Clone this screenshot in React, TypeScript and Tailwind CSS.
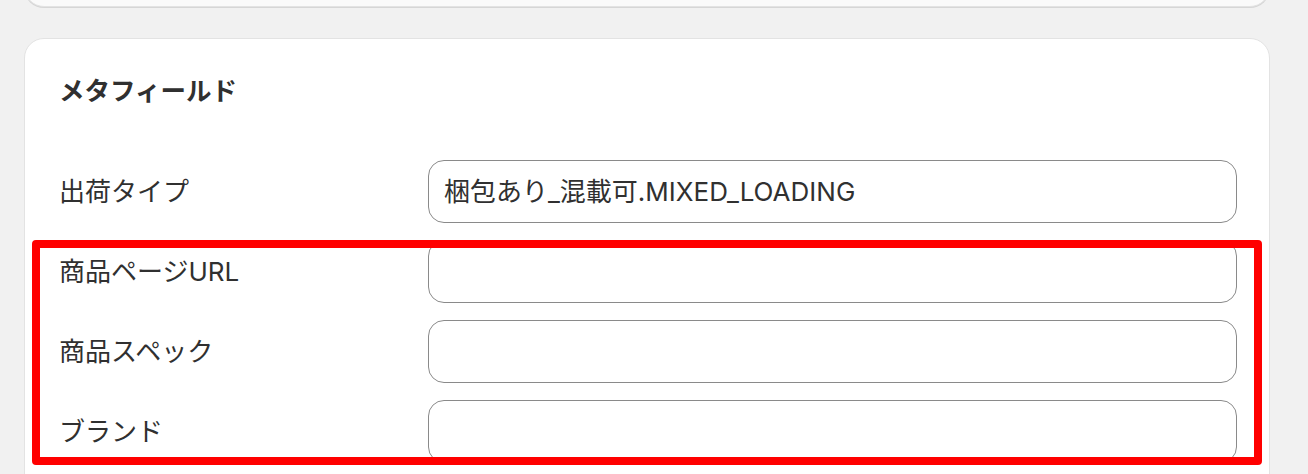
export default function App() {
    const rows = [
        { label: '出荷タイプ', value: '梱包あり_混載可.MIXED_LOADING' },
        { label: '商品ページURL', value: '' },
        { label: '商品スペック', value: '' },
        { label: 'ブランド', value: '' },
    ];

    return (
        <div
            className="relative h-[474px] w-[1308px] overflow-hidden bg-[#f1f1f1] pl-[24px] text-[#303030]"
            style={{ fontFamily: 'Inter, "Noto Sans CJK JP", sans-serif' }}
        >
            {/* previous card, mostly scrolled away */}
            <div className="-mt-[33px] h-[40px] w-[1246px] rounded-[20px] border border-[#e3e3e3] bg-[#fafafa] shadow-[0_1px_0_0_#d6d6d6]" />

            <div className="mt-[31px] w-[1246px] rounded-[20px] border border-[#e3e3e3] bg-white pl-[34px] pr-[32px] pt-[34px] pb-[40px]">
                <h2 className="text-[25.5px] font-bold leading-[36px]">メタフィールド</h2>

                <div className="mt-[51px] flex flex-col gap-[17px]">
                    {rows.map((row) => (
                        <div key={row.label} className="flex items-center">
                            <div className="w-[369px] shrink-0 text-[26px] leading-[36px]">{row.label}</div>
                            <input
                                readOnly
                                value={row.value}
                                className="h-[63px] flex-1 rounded-[16px] border border-[#8a8a8a] bg-white px-[15px] pb-[5px] text-[26px] text-[#303030] outline-none"
                            />
                        </div>
                    ))}
                </div>
            </div>

            {/* annotation box */}
            <div className="pointer-events-none absolute left-[32px] top-[240px] h-[225px] w-[1230px] rounded-[4px] border-[8px] border-[#ff0000]" />
        </div>
    );
}
